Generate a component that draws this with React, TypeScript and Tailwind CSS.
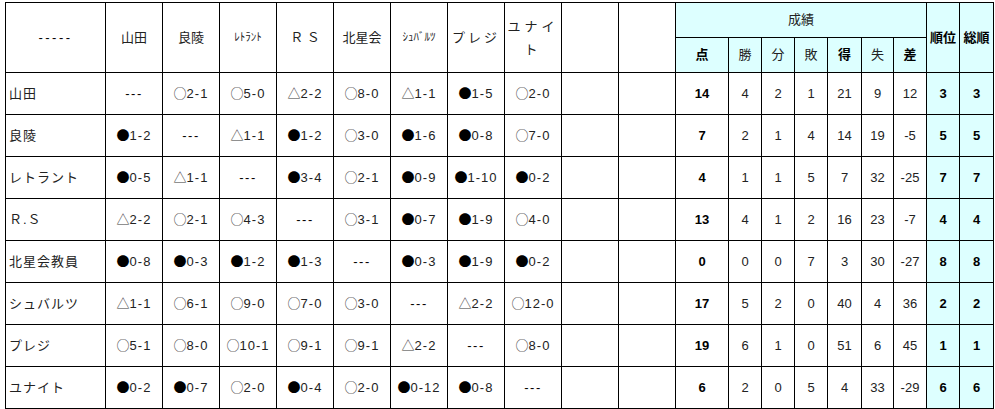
import React from "react";

const teams = ["山田", "良陵", "レトラント", "Ｒ.Ｓ", "北星会教員", "シュバルツ", "プレジ", "ユナイト"];

const results: string[][] = [
  ["---", "○2-1", "○5-0", "△2-2", "○8-0", "△1-1", "●1-5", "○2-0"],
  ["●1-2", "---", "△1-1", "●1-2", "○3-0", "●1-6", "●0-8", "○7-0"],
  ["●0-5", "△1-1", "---", "●3-4", "○2-1", "●0-9", "●1-10", "●0-2"],
  ["△2-2", "○2-1", "○4-3", "---", "○3-1", "●0-7", "●1-9", "○4-0"],
  ["●0-8", "●0-3", "●1-2", "●1-3", "---", "●0-3", "●1-9", "●0-2"],
  ["△1-1", "○6-1", "○9-0", "○7-0", "○3-0", "---", "△2-2", "○12-0"],
  ["○5-1", "○8-0", "○10-1", "○9-1", "○9-1", "△2-2", "---", "○8-0"],
  ["●0-2", "●0-7", "○2-0", "●0-4", "○2-0", "●0-12", "●0-8", "---"],
];

// 点 勝 分 敗 得 失 差 順位 総順
const stats: (string | number)[][] = [
  [14, 4, 2, 1, 21, 9, 12, 3, 3],
  [7, 2, 1, 4, 14, 19, -5, 5, 5],
  [4, 1, 1, 5, 7, 32, -25, 7, 7],
  [13, 4, 1, 2, 16, 23, -7, 4, 4],
  [0, 0, 0, 7, 3, 30, -27, 8, 8],
  [17, 5, 2, 0, 40, 4, 36, 2, 2],
  [19, 6, 1, 0, 51, 6, 45, 1, 1],
  [6, 2, 0, 5, 4, 33, -29, 6, 6],
];

const statWidths = ["w-[53px]", "w-[33px]", "w-[33px]", "w-[33px]", "w-[34px]", "w-[32px]", "w-[33px]", "w-[33px]", "w-[34px]"];

const cell = "border border-black p-0 text-center align-middle";
const cjk = { fontFamily: '"Noto Sans CJK JP", sans-serif' };

function Result({ v }: { v: string }) {
  if (v === "---") return <span className="tracking-[1.5px] text-black">---</span>;
  const mark = v[0];
  const score = v.slice(1);
  return (
    <span className="whitespace-nowrap">
      <span style={cjk} className={mark === "●" ? "text-black" : "text-[#3a3a3a]"}>
        {mark}
      </span>
      <span className="tracking-[1px]">{score}</span>
    </span>
  );
}

export default function App() {
  return (
    <div
      className="w-[995px] h-[409px] bg-white pt-[2px] pl-[5px] text-[13px] text-[#222] overflow-hidden"
      style={{ fontFamily: '"Liberation Sans", "Noto Sans CJK JP", sans-serif' }}
    >
      <table className="border-collapse table-fixed w-[989px]">
        <colgroup>
          <col className="w-[100px]" />
          {Array.from({ length: 10 }).map((_, i) => (
            <col key={i} className="w-[57px]" />
          ))}
          {statWidths.map((w, i) => (
            <col key={"s" + i} className={w} />
          ))}
        </colgroup>
        <thead>
          <tr className="h-[35px]">
            <th rowSpan={2} className={`${cell} font-normal text-black tracking-[2.5px]`}>-----</th>
            <th rowSpan={2} className={`${cell} font-normal`}>山田</th>
            <th rowSpan={2} className={`${cell} font-normal`}>良陵</th>
            <th rowSpan={2} className={`${cell} font-normal text-[11px]`}>ﾚﾄﾗﾝﾄ</th>
            <th rowSpan={2} className={`${cell} font-normal`}>Ｒ Ｓ</th>
            <th rowSpan={2} className={`${cell} font-normal`}>北星会</th>
            <th rowSpan={2} className={`${cell} font-normal text-[11px]`}>ｼｭﾊﾞﾙﾂ</th>
            <th rowSpan={2} className={`${cell} font-normal tracking-[3px]`}>プレジ</th>
            <th rowSpan={2} className={`${cell} font-normal tracking-[4px] leading-[23px]`}>
              ユナイ
              <br />ト
            </th>
            <th rowSpan={2} className={cell}></th>
            <th rowSpan={2} className={cell}></th>
            <th colSpan={7} className={`${cell} font-normal bg-[#ddffff]`}>成績</th>
            <th rowSpan={2} className={`${cell} font-bold text-black bg-[#ddffff]`}>順位</th>
            <th rowSpan={2} className={`${cell} font-bold text-black bg-[#ddffff]`}>総順</th>
          </tr>
          <tr className="h-[35px]">
            {["点", "勝", "分", "敗", "得", "失", "差"].map((h, i) => (
              <th
                key={h}
                className={`${cell} bg-[#ddffff] ${i === 0 || i === 4 || i === 6 ? "font-bold text-black" : "font-normal"}`}
              >
                {h}
              </th>
            ))}
          </tr>
        </thead>
        <tbody>
          {teams.map((team, r) => (
            <tr key={team} className="h-[42px]">
              <td className={`${cell} text-left pl-[3px] tracking-[1px]`}>{team}</td>
              {results[r].map((v, c) => (
                <td key={c} className={cell}>
                  <Result v={v} />
                </td>
              ))}
              <td className={cell}></td>
              <td className={cell}></td>
              {stats[r].map((v, c) => (
                <td
                  key={c}
                  className={`${cell} ${c === 0 || c >= 7 ? "font-bold text-black" : ""} ${c >= 7 ? "bg-[#ddffff]" : ""}`}
                >
                  {v}
                </td>
              ))}
            </tr>
          ))}
        </tbody>
      </table>
    </div>
  );
}
